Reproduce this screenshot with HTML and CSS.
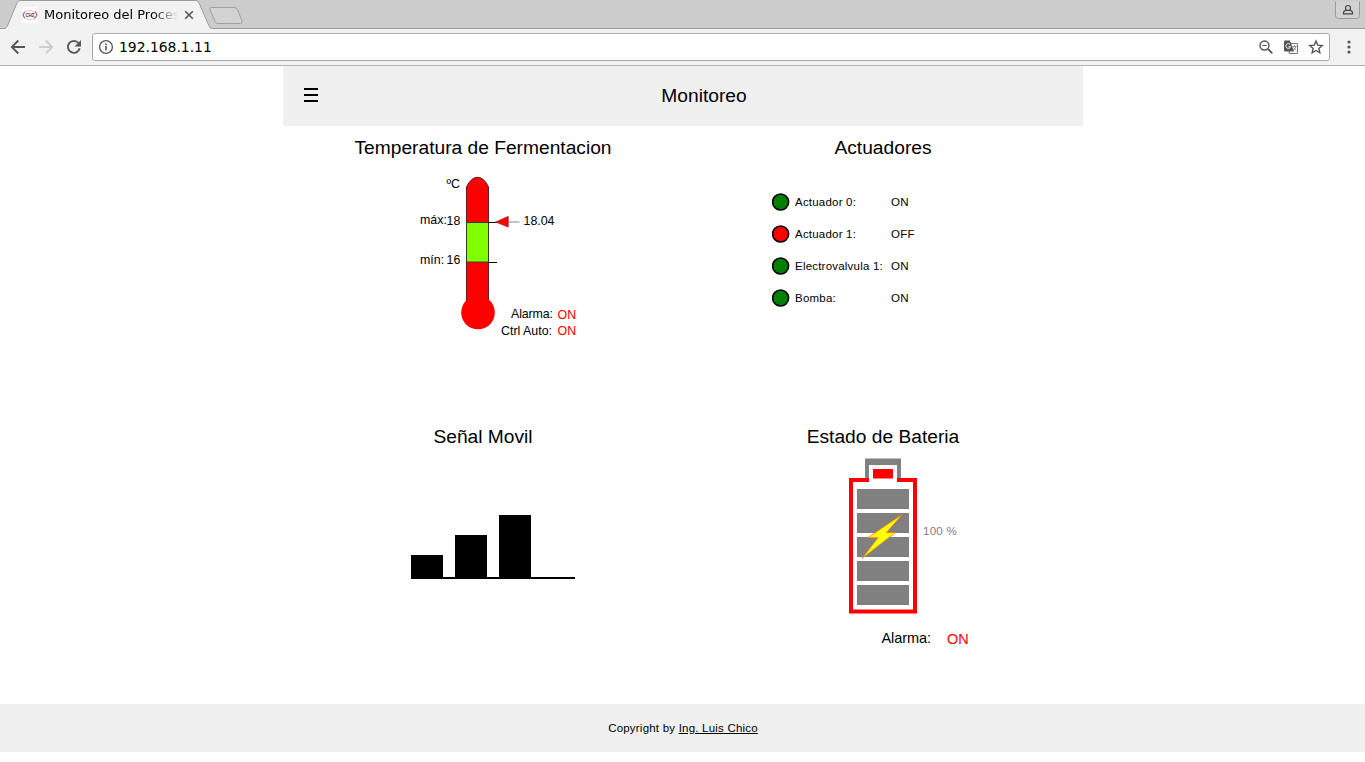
FILE: index.html
```html
<!DOCTYPE html>
<html lang="es">
<head>
<meta charset="utf-8">
<title>Monitoreo del Proceso</title>
<link rel="stylesheet" href="styles.css">
</head>
<body>
<div class="browser">
  <div class="tabstrip">
    <svg class="tab-shapes" width="260" height="29" viewBox="0 0 260 29">
      <path d="M0 28.500H5Q6.500 28 7.500 26L17 3Q18.200 .5 20.500 .5H195.500Q197.800 .5 199 3L209 26Q210 28.500 212.500 28.500H260" fill="none" stroke="#9b9b9b"/>
      <path d="M5 29Q7 28 8 26L17.500 3.200Q18.500 1 20.500 1H195.500Q197.500 1 198.500 3.200L208.500 26Q209.500 29 212.500 29Z" fill="#f2f2f2"/>
      <path d="M211.500 7.500H234Q236.500 7.500 237.500 9.500L242 21Q242.500 23.500 240.500 23.500H218Q216 23.500 215 21.500L210 10Q209 7.500 211.500 7.500Z" fill="#d2d2d2" stroke="#a0a0a0"/>
    </svg>
    <div class="tab">
      <svg class="favicon" width="16" height="16" viewBox="0 0 16 16">
        <rect width="16" height="16" fill="#fff"/>
        <ellipse cx="8" cy="8" rx="7.200" ry="4.400" fill="none" stroke="#e6bfd2" stroke-width="1"/>
        <path d="M3 5Q-.5 8 3 11M13 4.500Q17 8 12 11.500" fill="none" stroke="#b25c88" stroke-width="1.100"/>
        <text x="8" y="9.800" text-anchor="middle" class="fav-text">CHZ</text>
      </svg>
      <span class="tab-title">Monitoreo del Proces</span>
      <svg class="tab-close" width="10" height="10" viewBox="0 0 10 10"><path d="M1.200 1.200L8.800 8.800M8.800 1.200L1.200 8.800" stroke="#555" stroke-width="1.600"/></svg>
    </div>
    <svg class="profile" width="25" height="19" viewBox="0 0 25 19">
      <path d="M.5 1.500V15.500Q.5 18.500 3.500 18.500H21.500Q24.500 18.500 24.500 15.500V1.500" fill="#d2d2d2" stroke="#999"/>
      <circle cx="13" cy="8" r="2.500" fill="none" stroke="#444" stroke-width="1.200"/>
      <path d="M11.400 10.100Q8.500 10.800 8.500 12.800V13.800H17.500V12.800Q17.500 10.800 14.600 10.100" fill="none" stroke="#444" stroke-width="1.200"/>
    </svg>
  </div>
  <div class="toolbar">
    <svg class="nav-icons" width="92" height="36" viewBox="0 29 92 36" fill="none">
      <path d="M25 47H12M18.300 40.500L11.800 47L18.300 53.500" stroke="#555" stroke-width="1.800"/>
      <path d="M39 47H52M45.700 40.500L52.200 47L45.700 53.500" stroke="#ccc" stroke-width="1.800"/>
      <path d="M78.500 43A6 6 0 1 0 79.700 48.300" stroke="#555" stroke-width="1.900"/>
      <path d="M81 40V46.500H74.500Z" fill="#555"/>
    </svg>
    <div class="address">
      <svg width="16" height="16" viewBox="0 0 16 16"><circle cx="8" cy="8" r="6.400" fill="none" stroke="#555" stroke-width="1.300"/><path d="M8 7V11.600M8 4.400V6" stroke="#555" stroke-width="1.600"/></svg>
      <span class="url">192.168.1.11</span>
      <svg class="actions" width="68" height="18" viewBox="1257 38 68 18" fill="none">
        <circle cx="1264.500" cy="45.500" r="4.500" stroke="#555" stroke-width="1.400"/>
        <path d="M1268 49L1272.300 53.300" stroke="#555" stroke-width="1.800"/><path d="M1262.300 45.500H1266.700" stroke="#555"/>
        <path d="M1290 43.500H1297.500V53.500H1289Z" fill="#fff" stroke="#777"/>
        <path d="M1285 40.500H1290L1294 51.500H1285Q1284 51.500 1284 50.500V41.500Q1284 40.500 1285 40.500Z" fill="#555"/>
        <path d="M1290.200 44.500A2.400 2.400 0 1 0 1290.600 46.700H1288.400" stroke="#fff"/>
        <path d="M1292.500 46.500H1296.500M1294.500 45V46.500M1296 46.500Q1295 49.500 1292.500 50.500M1293.500 47.500L1296 50.500" stroke="#777" stroke-width=".8"/>
        <path d="M1316 41L1317.750 45.100L1322.200 45.500L1318.850 48.450L1319.850 52.800L1316 50.500L1312.150 52.800L1313.150 48.450L1309.800 45.500L1314.250 45.100Z" stroke="#555" stroke-width="1.400"/>
      </svg>
    </div>
    <svg class="menu" width="4" height="14" viewBox="0 0 4 14" fill="#555"><circle cx="2" cy="2" r="1.600"/><circle cx="2" cy="7" r="1.600"/><circle cx="2" cy="12" r="1.600"/></svg>
  </div>
</div>
<header class="page-header">
  <svg class="burger" width="16" height="16" viewBox="0 0 16 16"><path d="M1 1H15M1 7H15M1 13H15" stroke="#000" stroke-width="2"/></svg>
  <h1>Monitoreo</h1>
</header>
<main class="grid">
  <section class="panel">
    <h2>Temperatura de Fermentacion</h2>
    <svg class="drawing" width="400" height="249" viewBox="283 166 400 249">
      <path d="M466.500 302V187Q471 177.300 477.500 177.300T488.500 187V302" fill="red" stroke="#400" stroke-width=".8"/>
      <circle cx="478" cy="312.500" r="16.800" fill="red"/>
      <rect x="466.500" y="222.500" width="22" height="39.500" fill="#80ff00" stroke="#333" stroke-width=".9"/>
      <path d="M488 222.500H497M488 262.500H497" stroke="#000"/>
      <path d="M508 222H519.500" stroke="#888"/>
      <path d="M495.500 222L508.300 216.300V227.200Z" fill="red" stroke="#733" stroke-width=".6"/>
      <g class="t12">
        <text x="446.500" y="188">ºC</text>
        <text x="420" y="224">máx:</text><text x="446.500" y="225">18</text>
        <text x="420" y="264">mín:</text><text x="446.500" y="264">16</text>
        <text x="523.500" y="225">18.04</text>
        <text x="511" y="318" textLength="42">Alarma:</text>
        <text x="501" y="335" textLength="51">Ctrl Auto:</text>
        <g fill="red"><text x="557.500" y="319">ON</text><text x="557.500" y="335">ON</text></g>
      </g>
    </svg>
  </section>
  <section class="panel">
    <h2>Actuadores</h2>
    <ul class="actuators">
      <li><svg width="18" height="18"><circle class="lamp" cx="8.600" cy="9" r="8"/></svg><span>Actuador 0:</span><b>ON</b></li>
      <li><svg width="18" height="18"><circle class="lamp off" cx="8.600" cy="9" r="8"/></svg><span>Actuador 1:</span><b>OFF</b></li>
      <li><svg width="18" height="18"><circle class="lamp" cx="8.600" cy="9" r="8"/></svg><span>Electrovalvula 1:</span><b>ON</b></li>
      <li><svg width="18" height="18"><circle class="lamp" cx="8.600" cy="9" r="8"/></svg><span>Bomba:</span><b>ON</b></li>
    </ul>
  </section>
  <section class="panel">
    <h2>Señal Movil</h2>
    <svg class="drawing" width="400" height="249" viewBox="283 455 400 249">
      <path d="M411 555H443V577H455V535H487V577H499V515H531V577H575V579H411Z"/>
    </svg>
  </section>
  <section class="panel">
    <h2>Estado de Bateria</h2>
    <svg class="drawing" width="400" height="249" viewBox="683 455 400 249">
      <rect x="851" y="480" width="64" height="131.500" fill="#fff" stroke="red" stroke-width="4"/>
      <path d="M865 478V458.500H901V478H897V465H869V478Z" fill="gray"/>
      <rect x="869" y="465" width="28" height="18" fill="#fff"/>
      <rect x="873" y="469" width="20" height="9.500" fill="red"/>
      <path d="M857 489h52v20h-52zM857 513h52v20h-52zM857 537h52v20h-52zM857 561h52v20h-52zM857 585h52v20h-52z" fill="gray"/>
      <path d="M902.500 514.200L886.500 532.500H895.500L862 558.500L878 537.700H867.500Z" fill="#ff0" stroke="#f06a20" stroke-width=".7"/>
      <text class="percent" x="923" y="535">100 %</text>
      <text class="alarm" x="881.500" y="643" textLength="49.500">Alarma:</text>
      <text class="alarm" x="947" y="644" fill="red">ON</text>
    </svg>
  </section>
</main>
<footer class="page-footer">Copyright by <a>Ing. Luis Chico</a></footer>
</body>
</html>
```
FILE: styles.css
```css
* { box-sizing: border-box; }
body { margin: 0; background: #fff; color: #000; font-family: "Liberation Sans", Arial, sans-serif; }
svg { display: block; flex: none; }
.browser { height: 66px; font-family: "DejaVu Sans", sans-serif; }
.tabstrip { position: relative; display: flex; justify-content: space-between; align-items: flex-start; height: 29px; padding: 0 5px 0 22px; background: #ccc; border-bottom: 1px solid #9b9b9b; }
.tab-shapes { position: absolute; left: 0; top: 0; }
.tab { position: relative; display: flex; align-items: center; height: 29px; }
.favicon { margin-right: 6px; }
.fav-text { font: bold 4.5px "Liberation Sans", sans-serif; fill: #333; }
.tab-title { width: 134px; white-space: nowrap; font-size: 13px; line-height: 28px; -webkit-mask-image: linear-gradient(90deg, #000 108px, transparent 134px); mask-image: linear-gradient(90deg, #000 108px, transparent 134px); }
.tab-close { margin-left: 6px; }
.toolbar { display: flex; align-items: center; height: 37px; background: #f2f2f2; border-bottom: 1px solid #b5b5b5; }
.address { display: flex; align-items: center; width: 1238px; height: 28px; padding: 0 4px 0 5px; background: #fff; border: 1px solid #a8a8a8; border-radius: 3px; }
.url { margin-left: 5px; font-size: 13.9px; line-height: 16px; }
.actions { margin-left: auto; }
.menu { margin-left: 17px; }
.page-header { display: grid; grid-template-columns: 42px 1fr; align-items: center; width: 800px; height: 60px; margin-left: 283px; background: #f0f0f0; }
.burger { margin-left: 20px; }
h1, h2 { margin: 0; font-size: 19.2px; font-weight: normal; text-align: center; }
.grid { display: grid; grid-template-columns: 400px 400px; grid-template-rows: 289px 289px; width: 800px; margin-left: 283px; }
h2 { height: 40px; line-height: 43px; }
.t12 { font-size: 12.4px; }
.actuators { margin: 20px 0 0 89px; padding: 0; list-style: none; font-size: 11.5px; letter-spacing: .21px; }
.actuators li { display: grid; grid-template-columns: 23px 96px auto; align-items: center; height: 32px; }
.actuators b { font-weight: normal; }
.lamp { fill: green; stroke: #000; stroke-width: 1.6px; }
.lamp.off { fill: red; }
.percent { font-size: 11.5px; letter-spacing: .25px; fill: gray; }
.alarm { font-size: 14.5px; }
.page-footer { height: 48px; line-height: 48px; padding-left: 1px; background: #f0f0f0; text-align: center; font-size: 11.5px; letter-spacing: .21px; }
.page-footer a { text-decoration: underline; }
```
